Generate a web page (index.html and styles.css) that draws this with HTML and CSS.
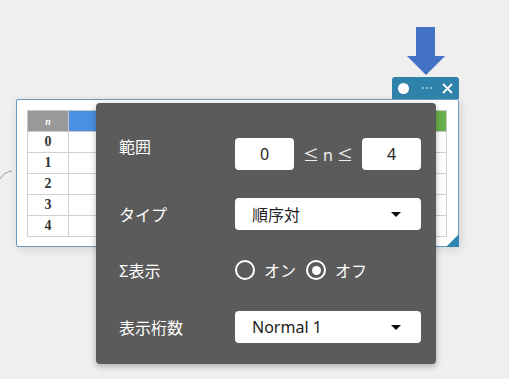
FILE: index.html
```html
<!DOCTYPE html>
<html lang="ja">
<head>
<meta charset="utf-8">
<link rel="stylesheet" href="styles.css">
</head>
<body>
<div class="canvas">
  <svg class="link" width="14" height="14" viewBox="0 0 14 14"><path d="M0 11 Q4 4 12 3" fill="none" stroke="#9a9a9a" stroke-width="1"/></svg>

  <div class="widget">
    <table class="seq">
      <tr><th class="hn">n</th><th class="hb"></th><th class="hg"></th></tr>
      <tr><td>0</td><td></td><td></td></tr>
      <tr><td>1</td><td></td><td></td></tr>
      <tr><td>2</td><td></td><td></td></tr>
      <tr><td>3</td><td></td><td></td></tr>
      <tr><td>4</td><td></td><td></td></tr>
    </table>
    <div class="resize"></div>
  </div>

  <svg class="arrow" width="38" height="48" viewBox="0 0 38 48"><path d="M9 0 H28 V29 H38 L19 48 L0 29 H9 Z" fill="#4472c4"/></svg>

  <div class="toolbar">
    <span class="dot"></span>
    <svg class="more" width="12" height="4" viewBox="0 0 12 4"><circle cx="2" cy="2" r="1" fill="#b7d3e3"/><circle cx="6" cy="2" r="1" fill="#b7d3e3"/><circle cx="10" cy="2" r="1" fill="#b7d3e3"/></svg>
    <svg class="close" width="11" height="11" viewBox="0 0 11 11"><path d="M1 1 L10 10 M10 1 L1 10" stroke="#fff" stroke-width="1.8" fill="none"/></svg>
  </div>

  <div class="panel">
    <div class="row">
      <div class="label label-top">範囲</div>
      <div class="range">
        <div class="box">0</div>
        <span class="le">≤ n ≤</span>
        <div class="box">4</div>
      </div>
    </div>
    <div class="row r2">
      <div class="label">タイプ</div>
      <div class="select"><span>順序対</span><span class="caret"></span></div>
    </div>
    <div class="row r3">
      <div class="label">Σ表示</div>
      <div class="radios">
        <span class="radio"></span><span class="rl">オン</span>
        <span class="radio on"></span><span class="rl">オフ</span>
      </div>
    </div>
    <div class="row r4">
      <div class="label">表示桁数</div>
      <div class="select"><span>Normal 1</span><span class="caret"></span></div>
    </div>
  </div>
</div>
</body>
</html>
```

FILE: styles.css
```css
html, body {
  margin: 0;
  padding: 0;
  background: #efefef;
  font-family: "Noto Sans", "Noto Sans CJK JP", sans-serif;
}
.canvas {
  position: relative;
  width: 509px;
  height: 379px;
  overflow: hidden;
}
.link {
  position: absolute;
  left: 0;
  top: 168px;
}
.widget {
  position: absolute;
  left: 16px;
  top: 99px;
  width: 420px;
  height: 126px;
  padding: 10px 11px 10px 10px;
  background: #fff;
  border: 1px solid #6b98bd;
  border-radius: 2px;
  box-shadow: 2px 2px 10px rgba(0,0,0,0.12);
}
.seq {
  border-collapse: collapse;
  width: 420px;
  font-family: "Liberation Serif", serif;
  font-weight: bold;
  font-size: 14px;
  color: #333;
}
.seq th, .seq td {
  height: 20px;
  border: 1px solid #d0d0d0;
  padding: 0;
  text-align: center;
}
.seq th { border-color: #c8c8c8; }
.hn {
  width: 40px;
  background: #999;
  color: #fff;
  font-style: italic;
  font-size: 10px;
}
.hb { background: #4a90e2; width: 180px; }
.hg { background: #6ab04c; }
.resize {
  position: absolute;
  right: -1px;
  bottom: -1px;
  width: 0;
  height: 0;
  border-left: 13px solid transparent;
  border-bottom: 13px solid #2f86b0;
}
.arrow {
  position: absolute;
  left: 407px;
  top: 27px;
}
.toolbar {
  position: absolute;
  left: 392px;
  top: 77px;
  width: 67px;
  height: 22px;
  background: #2f83aa;
  border-radius: 3px 3px 0 0;
  display: flex;
  align-items: center;
  padding: 0 6px;
  box-sizing: border-box;
  justify-content: space-between;
}
.dot {
  width: 11px;
  height: 11px;
  border-radius: 50%;
  background: #fff;
}
.more { display: block; margin-left: 3px; }
.close { display: block; }
.panel {
  position: absolute;
  left: 96px;
  top: 103px;
  width: 340px;
  height: 261px;
  box-sizing: border-box;
  padding: 35px 15px 0 23px;
  background: #5b5b5b;
  border-radius: 4px;
  box-shadow: 0 2px 6px rgba(0,0,0,0.3);
  color: #fff;
  display: flex;
  flex-direction: column;
}
.row {
  display: flex;
  align-items: center;
  height: 32px;
}
.r2 { margin-top: 28px; }
.r3 { margin-top: 24px; }
.r4 { margin-top: 25px; }
.label {
  width: 116px;
  font-size: 16px;
  font-family: "Noto Sans CJK JP", sans-serif;
  line-height: 1;
}
.label-top { align-self: flex-start; margin-top: 0; }
.range {
  display: flex;
  align-items: center;
}
.box {
  width: 59px;
  height: 32px;
  background: #fff;
  border-radius: 4px;
  color: #222;
  font-size: 16px;
  display: flex;
  align-items: center;
  justify-content: center;
}
.le {
  width: 68px;
  text-align: center;
  font-size: 16px;
  color: #f2f2f2;
}
.select {
  width: 186px;
  height: 32px;
  box-sizing: border-box;
  background: #fff;
  border-radius: 4px;
  color: #222;
  font-size: 16px;
  font-family: "Noto Sans", "Noto Sans CJK JP", sans-serif;
  display: flex;
  align-items: center;
  justify-content: space-between;
  padding: 0 20px 0 17px;
}
.caret {
  width: 0;
  height: 0;
  border-left: 5px solid transparent;
  border-right: 5px solid transparent;
  border-top: 5px solid #111;
}
.radios {
  display: flex;
  align-items: center;
  font-size: 16px;
  font-family: "Noto Sans CJK JP", sans-serif;
}
.radio {
  width: 16px;
  height: 16px;
  border: 2px solid #fff;
  border-radius: 50%;
  position: relative;
  margin-right: 9px;
}
.radio.on::after {
  content: "";
  position: absolute;
  left: 3.5px;
  top: 3.5px;
  width: 9px;
  height: 9px;
  border-radius: 50%;
  background: #fff;
}
.rl { margin-right: 10px; }
```
